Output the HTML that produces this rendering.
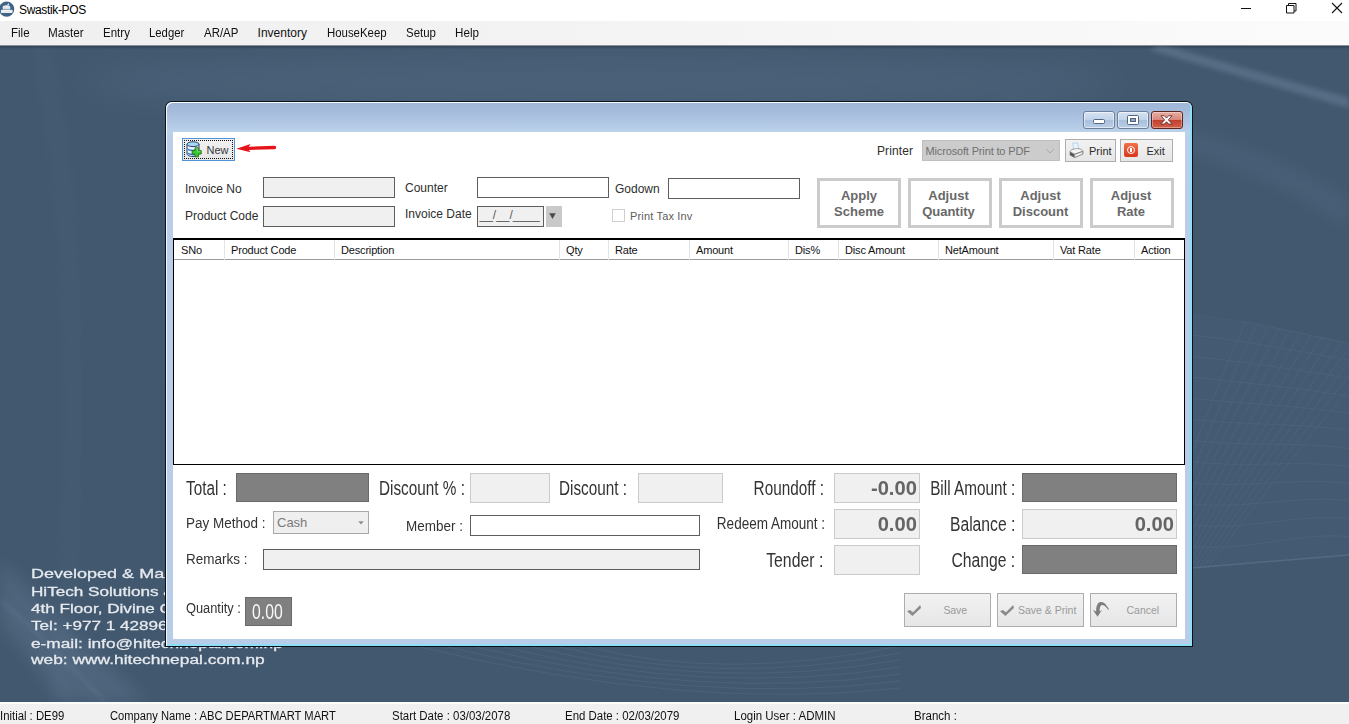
<!DOCTYPE html>
<html>
<head>
<meta charset="utf-8">
<title>Swastik-POS</title>
<style>
*{box-sizing:border-box;margin:0;padding:0}
html,body{width:1349px;height:724px;overflow:hidden}
body{position:relative;font-family:"Liberation Sans",sans-serif;font-size:12px;color:#000;background:#42586f}
.abs{position:absolute}
.t{position:absolute;white-space:nowrap;line-height:1}
#titlebar{left:0;top:0;width:1349px;height:21px;background:#fff}
#menubar{left:0;top:21px;width:1349px;height:24px;background:linear-gradient(90deg,#f0f0f0 0,#f2f2f2 35%,#fbfbfb 100%)}
#menubar .t{top:6px;font-size:12px;color:#111}
#mdi{left:0;top:45px;width:1349px;height:657px;background:#42586f;overflow:hidden;border-top:1px solid #8b9097}
#status{left:0;top:702px;width:1349px;height:22px;background:#f0f0f0;border-top:2px solid #fcfcfc}
#status .t{top:5.500px;font-size:12px;color:#111;transform-origin:0 50%;transform:scaleX(.935)}
.cb{border:1px solid #6d7f99;border-radius:3px;background:linear-gradient(#d6e2f1 0,#c1d3ea 48%,#a9c0de 52%,#b9cde6 100%);box-shadow:inset 0 0 0 1px rgba(255,255,255,.55)}
.cb.cx{border-color:#5d2620;background:linear-gradient(#e9ada3 0,#d9877a 48%,#c2402f 52%,#d4604a 100%);box-shadow:inset 0 0 0 1px rgba(255,255,255,.35)}
#dlg{left:165px;top:101px;width:1028px;height:546px;background:#0b1118;border-radius:7px 7px 0 0}
#dlgin{left:1px;top:1px;width:1026px;height:544px;border-radius:6px 6px 0 0;background:linear-gradient(#9fb6d7 0,#a3bbda 8px,#afc6e3 19px,#bcd1ea 30px,#b9cfe9 36px,#b8cee8 100%);box-shadow:inset 1px 1px 0 0 #f6f9fd,inset -2px -2px 0 0 #8edef8}
#content{left:173px;top:132px;width:1012px;height:507px;background:#fff}
.lbl{font-size:12px;color:#2e2e2e}
.inp{position:absolute;border:1px solid #5e5e5e;background:#fff}
.inp.dis{background:#f0f0f0}
.gbox{position:absolute;background:#808080;border:1px solid #6a6a6a}
.lbox{position:absolute;background:#f0f0f0;border:1px solid #cbcbcb}
.bigbtn{position:absolute;border:3px solid #cbcbcb;background:#fff;color:#686868;font-weight:bold;font-size:13px;line-height:16px;text-align:center;padding-top:7px}
.sbtn{position:absolute;border:1px solid #adadad;background:linear-gradient(#f2f2f2,#e6e6e6)}
.hdr{position:absolute;top:0;height:20px;border-left:1px solid #e3e3e3;font-size:11px;color:#111;padding:4px 0 0 6px;white-space:nowrap;letter-spacing:-.17px}
.num{position:absolute;white-space:nowrap;line-height:1;font-weight:bold;color:#656565;font-size:21px;right:2px;top:3.200px;transform-origin:100% 50%;transform:scaleX(.96)}
.bg{position:absolute;white-space:nowrap;line-height:1;left:30.600px;font-weight:normal;-webkit-text-stroke:.28px #e6eaef;color:#e6eaef;font-size:13px;transform-origin:0 50%}
</style>
</head>
<body>
<div id="titlebar" class="abs">
<svg class="abs" style="left:0;top:0" width="16" height="18" viewBox="0 0 16 18"><circle cx="6.700" cy="9.100" r="7.600" fill="#3f6488"/><path d="M0.900 9.900h11.600v3H0.900z" fill="#fbfbfb"/><path d="M1 11.200h11.400" stroke="#c9d3de" stroke-width=".6"/><path d="M2.700 9.400V7.200c0-1.200 1.300-1.900 3.700-1.900s3.800.7 3.800 1.900v2.200z" fill="#e9edf2"/><path d="M6.800 5.300l1.600-2.100 1 .7-1.200 1.800z" fill="#dfe5ec"/><path d="M3.600 8.300h2.300M7 8.300h2.300" stroke="#b8c3cf" stroke-width=".7"/></svg>
<div class="t" style="left:19px;top:4px;font-size:12px;color:#000;letter-spacing:-.35px">Swastik-POS</div>
<svg class="abs" style="left:1236px;top:0" width="113" height="22" viewBox="0 0 113 22"><g stroke="#111" stroke-width="1" fill="none"><path d="M5 8.500h10"/><path d="M50.500 5.500h7.500v7.500h-7.500z"/><path d="M52.500 5.500v-2h7.500v7.500h-2"/><path d="M96 3l10 10M106 3L96 13" stroke-width="1.100"/></g></svg>
</div>
<div id="menubar" class="abs"><div class="t" style="left:10.5px;transform-origin:0 50%;transform:scaleX(0.96)">File</div><div class="t" style="left:47.6px;transform-origin:0 50%;transform:scaleX(0.975)">Master</div><div class="t" style="left:102.5px;transform-origin:0 50%;transform:scaleX(0.96)">Entry</div><div class="t" style="left:148.5px;transform-origin:0 50%;transform:scaleX(0.945)">Ledger</div><div class="t" style="left:203.8px;transform-origin:0 50%;transform:scaleX(0.955)">AR/AP</div><div class="t" style="left:257.6px;transform-origin:0 50%;transform:scaleX(1)">Inventory</div><div class="t" style="left:326.6px;transform-origin:0 50%;transform:scaleX(0.95)">HouseKeep</div><div class="t" style="left:405.6px;transform-origin:0 50%;transform:scaleX(0.955)">Setup</div><div class="t" style="left:454.5px;transform-origin:0 50%;transform:scaleX(0.97)">Help</div></div>
<div id="mdi" class="abs"><svg class="abs" style="left:0;top:-1px" width="1349" height="657" viewBox="0 45 1349 657"><defs><filter id="b8" x="-20%" y="-50%" width="140%" height="200%"><feGaussianBlur stdDeviation="8"/></filter><filter id="b16" x="-20%" y="-100%" width="140%" height="300%"><feGaussianBlur stdDeviation="16"/></filter><filter id="b3" x="-20%" y="-50%" width="140%" height="200%"><feGaussianBlur stdDeviation="2.5"/></filter><clipPath id="mclip"><path d="M1180 313 C1240 318 1300 332 1360 345 L1360 554 L1180 569z"/></clipPath><linearGradient id="topsh" x1="0" y1="0" x2="0" y2="1"><stop offset="0" stop-color="#2e3e52" stop-opacity=".9"/><stop offset="1" stop-color="#2e3e52" stop-opacity="0"/></linearGradient></defs><rect x="0" y="46" width="1349" height="3" fill="url(#topsh)"/><ellipse cx="600" cy="82" rx="520" ry="26" fill="#8fb0d0" opacity=".10" filter="url(#b16)"/><path d="M1160 44 L1349 98 L1349 108 L1150 50z" fill="#a9c4de" opacity=".2" filter="url(#b3)"/><path d="M1000 100 C1150 110 1280 150 1349 200 L1349 230 C1270 170 1150 130 1000 118z" fill="#8fb0d0" opacity=".07" filter="url(#b8)"/><path d="M0 560 C40 600 90 650 150 702 L60 702 C40 670 15 640 0 625z" fill="#9fbcd8" opacity=".12" filter="url(#b8)"/><path d="M0 600 C30 625 70 665 105 702" fill="none" stroke="#b5cde4" stroke-width="2" opacity=".16" filter="url(#b3)"/><path d="M40 45 C75 200 85 420 60 702" fill="none" stroke="#b5cde4" stroke-width="14" opacity=".03" filter="url(#b8)"/><path d="M1180 313 C1240 318 1300 332 1360 345 L1360 554 L1180 569z" fill="#8fb0d0" opacity=".035"/><path d="M1180 569 L1360 554" stroke="#a9c4de" stroke-width="1.500" opacity=".16" fill="none"/><g fill="none" stroke="#9fbad4" stroke-width="1" opacity=".09"><path d="M420 647 Q690 712 900 688"/><path d="M448 647 Q696 707 900 681"/><path d="M476 647 Q702 702 900 674"/><path d="M504 647 Q708 697 900 667"/><path d="M532 647 Q714 692 900 660"/><path d="M560 647 Q720 687 900 653"/><path d="M588 647 Q726 682 900 646"/></g><g fill="none" stroke="#9fbad4" stroke-width="1" opacity=".075" clip-path="url(#mclip)"><path d="M1180 313 C1240 317 1300 335 1360 345"/><path d="M1180 334 C1240 339 1300 352 1360 362"/><path d="M1180 355 C1240 361 1300 370 1360 380"/><path d="M1180 376 C1240 382 1300 388 1360 398"/><path d="M1180 397 C1240 404 1300 405 1360 415"/><path d="M1180 418 C1240 426 1300 422 1360 432"/><path d="M1180 439 C1240 448 1300 440 1360 450"/><path d="M1180 460 C1240 470 1300 458 1360 468"/><path d="M1180 481 C1240 491 1300 475 1360 485"/><path d="M1180 502 C1240 513 1300 492 1360 502"/><path d="M1180 523 C1240 535 1300 510 1360 520"/><path d="M1180 544 C1240 557 1300 528 1360 538"/><path d="M1150 575 Q1192 440 1255 300"/><path d="M1154 575 Q1201 440 1268 300"/><path d="M1158 575 Q1210 440 1281 300"/><path d="M1162 575 Q1218 440 1294 300"/><path d="M1166 575 Q1226 440 1307 300"/><path d="M1170 575 Q1235 440 1320 300"/><path d="M1174 575 Q1244 440 1333 300"/><path d="M1178 575 Q1252 440 1346 300"/><path d="M1182 575 Q1260 440 1359 300"/><path d="M1186 575 Q1269 440 1372 300"/><path d="M1190 575 Q1278 440 1385 300"/><path d="M1194 575 Q1286 440 1398 300"/><path d="M1198 575 Q1294 440 1411 300"/><path d="M1202 575 Q1303 440 1424 300"/></g></svg><div class="bg" style="top:521.26px;font-size:13.4px;transform:scaleX(1.345)">Developed &amp; Maintained By:</div><div class="bg" style="top:539.82px;font-size:12.5px;transform:scaleX(1.37)">HiTech Solutions &amp; Services</div><div class="bg" style="top:557.42px;font-size:12.5px;transform:scaleX(1.37)">4th Floor, Divine Complex</div><div class="bg" style="top:573.72px;font-size:12.5px;transform:scaleX(1.37)">Tel: +977 1 4289640</div><div class="bg" style="top:591.72px;font-size:12.5px;transform:scaleX(1.382)">e-mail: info@hitechnepal.com.np</div><div class="bg" style="top:608.42px;font-size:12.5px;transform:scaleX(1.39)">web: www.hitechnepal.com.np</div></div>
<div id="dlg" class="abs"><div id="dlgin" class="abs"></div>
<div class="abs cb" style="left:918px;top:10px;width:32px;height:18px"><div class="abs" style="left:9px;top:7px;width:12px;height:5px;background:#fff;border:1px solid #55657f;border-radius:1.500px"></div></div>
<div class="abs cb" style="left:952px;top:10px;width:32px;height:18px"><div class="abs" style="left:9px;top:3px;width:12px;height:9.500px;background:#fff;border:1px solid #55657f;border-radius:1.500px"><div class="abs" style="left:2px;top:2px;width:6px;height:3.500px;background:#8ea3c0;border:1px solid #55657f"></div></div></div>
<div class="abs cb cx" style="left:986px;top:10px;width:32px;height:18px"><svg class="abs" style="left:8px;top:3px" width="13" height="9.800" viewBox="0 0 14 10.600" preserveAspectRatio="none"><path d="M1 0.800h3.700l2.300 2.500 2.300-2.500H13L9 5.300l4.200 4.500H9.300L7 7.300 4.700 9.800H0.800L5 5.300z" fill="#fff" stroke="#5d2a26" stroke-width=".9" stroke-linejoin="round"/></svg></div>
</div>
<div id="content" class="abs">
<div class="abs" style="left:9px;top:6px;width:53px;height:23px;border:1px solid #4f93d8;background:linear-gradient(#f1f1f1,#e6e6e6)"><div class="abs" style="left:1px;top:1px;width:49px;height:19px;border:1px dotted #111"></div><svg class="abs" style="left:2.500px;top:2px" width="16" height="17" viewBox="0 0 16 17"><path d="M1 3.200v9.600c0 1.500 2.700 2.700 6 2.700s6-1.200 6-2.700V3.200z" fill="#eaf3fb" stroke="#2b3f68" stroke-width="1"/><path d="M1.500 6.400c0 1.300 2.500 2.300 5.500 2.300s5.500-1 5.500-2.300v1.700c0 1.300-2.500 2.300-5.500 2.300s-5.500-1-5.500-2.300zM1.500 10.400c0 1.300 2.500 2.300 5.500 2.300s5.500-1 5.500-2.300v1.700c0 1.300-2.500 2.300-5.500 2.300s-5.500-1-5.500-2.300z" fill="#3d78c8"/><ellipse cx="7" cy="3.200" rx="6" ry="2.400" fill="#a6dbf3" stroke="#2b3f68" stroke-width="1"/><path d="M9 6.800h3.400v2.800h2.800V13h-2.800v2.800H9V13H6.200V9.600H9z" fill="#3fca2f" stroke="#1c6f18" stroke-width=".9" stroke-linejoin="round"/><path d="M9.700 7.600h2v2.800h2.800" fill="none" stroke="#9af08c" stroke-width=".7" opacity=".8"/></svg><div class="t" style="left:23.500px;top:6px;font-size:11px;color:#3a3a3a">New</div></div>
<svg class="abs" style="left:63px;top:10px" width="42" height="12" viewBox="0 0 42 12"><path d="M0.300 6.700L14.600 2.100 12.800 4.700 38.500 3.800c2.200 0 2.200 3.400 0 3.500L12.800 8l1.800 2.200z" fill="#e6141a"/></svg>
<div class="t lbl" style="left:704px;top:13.4px;letter-spacing:.1px">Printer</div>
<div class="abs" style="left:749px;top:8px;width:138px;height:21px;background:#cccccc;border:1px solid #bfbfbf"><div class="t" style="left:2.500px;top:5.300px;font-size:11px;color:#707070;letter-spacing:-.15px">Microsoft Print to PDF</div><svg class="abs" style="left:122px;top:7px" width="10" height="7" viewBox="0 0 10 7"><path d="M1 1l4 4 4-4" fill="none" stroke="#a9a9a9" stroke-width="1"/></svg></div>
<div class="sbtn" style="left:892px;top:7px;width:51px;height:23px"><svg class="abs" style="left:2.500px;top:1.500px" width="15" height="17" viewBox="0 0 15 17"><path d="M3.800 1.200l4.800-.400 1.200 6.400-5.200 1z" fill="#eaf4ff" stroke="#a9c9ee" stroke-width=".8"/><path d="M1 9.800C1 8.300 4 6.700 7.600 6.600c3.400 0 6.300 1 6.300 2.800v2.600l-8.400 3.600L1 13z" fill="#f3f3f3" stroke="#8a8a8a" stroke-width=".8"/><path d="M1 9.900l4.500 2.300 8.400-2.900" fill="none" stroke="#6f6f6f" stroke-width=".9"/><path d="M1 10.200l4.500 2.300v3l-4.500-2.600z" fill="#555"/><path d="M5.500 12.500l8.400-3v2.500l-8.400 3.500z" fill="#d8d8d8" stroke="#777" stroke-width=".6"/><path d="M6.500 13.600l6-2.300" stroke="#fff" stroke-width="1"/></svg><div class="t" style="left:23px;top:5.500px;font-size:11px;color:#2b2b2b">Print</div></div>
<div class="sbtn" style="left:947px;top:7px;width:53px;height:23px"><div class="abs" style="left:3px;top:3px;width:14px;height:14px;border-radius:2px;background:linear-gradient(#f2704a,#d8361a)"><div class="abs" style="left:2.700px;top:2.700px;width:8.600px;height:8.600px;border:1.400px solid #fff;border-radius:50%"></div><div class="abs" style="left:6.300px;top:5.300px;width:1.400px;height:3.400px;background:#fff"></div></div><div class="t" style="left:25.500px;top:5.500px;font-size:11px;color:#2b2b2b">Exit</div></div>
<div class="t lbl" style="left:12px;top:51px;">Invoice No</div>
<div class="inp dis" style="left:90px;top:45px;width:132px;height:21px"></div>
<div class="t lbl" style="left:232px;top:50px;">Counter</div>
<div class="inp " style="left:304px;top:45px;width:132px;height:21px"></div>
<div class="t lbl" style="left:442px;top:51px;">Godown</div>
<div class="inp " style="left:495px;top:46px;width:132px;height:21px"></div>
<div class="t lbl" style="left:12px;top:78px;">Product Code</div>
<div class="inp dis" style="left:90px;top:74px;width:132px;height:21px"></div>
<div class="t lbl" style="left:232px;top:76px;">Invoice Date</div>
<div class="inp dis" style="left:304px;top:74px;width:67px;height:21px"><div class="t" style="left:1.500px;top:2px;font-size:12px;color:#5a5a5a">__/__/____</div></div>
<div class="abs" style="left:373px;top:74px;width:16px;height:21px;background:#c9c9c9"><svg class="abs" style="left:3px;top:7px" width="8" height="7" viewBox="0 0 8 7"><path d="M0.300 0.300h6.400L3.500 6z" fill="#4a4a4a"/></svg></div>
<div class="abs" style="left:439px;top:77px;width:13px;height:13px;border:1px solid #cfcfcf;background:#fff"></div>
<div class="t lbl" style="left:457px;top:79px;font-size:11px;color:#5c5c5c;letter-spacing:.17px">Print Tax Inv</div>
<div class="bigbtn" style="left:644px;top:46px;width:84px;height:50px;padding-right:0px">Apply<br>Scheme</div>
<div class="bigbtn" style="left:735px;top:46px;width:84px;height:50px;padding-right:3px">Adjust<br>Quantity</div>
<div class="bigbtn" style="left:826px;top:46px;width:84px;height:50px;padding-right:1px">Adjust<br>Discount</div>
<div class="bigbtn" style="left:917px;top:46px;width:84px;height:50px;padding-right:2px">Adjust<br>Rate</div>
<div class="abs" id="grid" style="left:0px;top:106px;width:1012px;height:227px;border:1px solid #000;border-top-width:2px;background:#fff"><div class="abs" style="left:0;top:0;width:1010px;height:20px;border-bottom:1px solid #9a9a9a;background:#fff"></div><div class="hdr" style="left:1px;border-left:none;">SNo</div><div class="hdr" style="left:50px;">Product Code</div><div class="hdr" style="left:160px;">Description</div><div class="hdr" style="left:385px;">Qty</div><div class="hdr" style="left:434px;">Rate</div><div class="hdr" style="left:515px;">Amount</div><div class="hdr" style="left:614px;">Dis%</div><div class="hdr" style="left:664px;">Disc Amount</div><div class="hdr" style="left:764px;">NetAmount</div><div class="hdr" style="left:879px;">Vat Rate</div><div class="hdr" style="left:960px;">Action</div></div>
<div class="t" style="left:13px;top:345.77px;font-size:20px;color:#333;transform-origin:0 50%;transform:scaleX(0.765)">Total :</div>
<div class="t" style="left:206px;top:345.77px;font-size:20px;color:#333;transform-origin:0 50%;transform:scaleX(0.765)">Discount % :</div>
<div class="t" style="left:386px;top:345.77px;font-size:20px;color:#333;transform-origin:0 50%;transform:scaleX(0.765)">Discount :</div>
<div class="t" style="right:361.5px;top:346.07px;font-size:20px;color:#333;transform-origin:100% 50%;transform:scaleX(0.765)">Roundoff :</div>
<div class="t" style="right:169.5px;top:345.77px;font-size:20px;color:#333;transform-origin:100% 50%;transform:scaleX(0.765)">Bill Amount :</div>
<div class="t" style="left:13px;top:384.38px;font-size:14.67px;color:#333;transform-origin:0 50%;transform:scaleX(0.92)">Pay Method :</div>
<div class="t" style="left:233px;top:386.58px;font-size:14.67px;color:#333;transform-origin:0 50%;transform:scaleX(0.92)">Member :</div>
<div class="t" style="right:359.5px;top:384.46px;font-size:16px;color:#333;transform-origin:100% 50%;transform:scaleX(0.845)">Redeem Amount :</div>
<div class="t" style="right:169.5px;top:382.37px;font-size:20px;color:#333;transform-origin:100% 50%;transform:scaleX(0.785)">Balance :</div>
<div class="t" style="left:13px;top:420.48px;font-size:14.67px;color:#333;transform-origin:0 50%;transform:scaleX(0.92)">Remarks :</div>
<div class="t" style="right:361.5px;top:417.67px;font-size:20px;color:#333;transform-origin:100% 50%;transform:scaleX(0.79)">Tender :</div>
<div class="t" style="right:169.5px;top:417.67px;font-size:20px;color:#333;transform-origin:100% 50%;transform:scaleX(0.785)">Change :</div>
<div class="t" style="left:13px;top:468.78px;font-size:14.67px;color:#333;transform-origin:0 50%;transform:scaleX(0.875)">Quantity :</div>
<div class="gbox" style="left:63px;top:341px;width:133px;height:29px"></div>
<div class="lbox" style="left:297px;top:341px;width:80px;height:30px"></div>
<div class="lbox" style="left:465px;top:341px;width:85px;height:30px"></div>
<div class="lbox" style="left:661px;top:341px;width:86px;height:30px"><div class="num">-0.00</div></div>
<div class="gbox" style="left:849px;top:341px;width:155px;height:29px"></div>
<div class="abs" style="left:100px;top:379px;width:96px;height:23px;background:#efefef;border:1px solid #a9a9a9"><div class="t" style="left:3px;top:4px;font-size:13px;color:#7a7a7a">Cash</div><svg class="abs" style="left:84px;top:9px" width="6" height="4" viewBox="0 0 6 4"><path d="M0.300 0.300h5.400L3 3.500z" fill="#8e8e8e"/></svg></div>
<div class="inp" style="left:297px;top:383px;width:230px;height:21px"></div>
<div class="lbox" style="left:661px;top:377px;width:86px;height:30px"><div class="num">0.00</div></div>
<div class="lbox" style="left:849px;top:377px;width:155px;height:30px"><div class="num">0.00</div></div>
<div class="inp dis" style="left:90px;top:417px;width:437px;height:21px"></div>
<div class="lbox" style="left:661px;top:413px;width:86px;height:30px"></div>
<div class="gbox" style="left:849px;top:413px;width:155px;height:29px"></div>
<div class="gbox" style="left:72px;top:465px;width:47px;height:29px"><div class="t" style="left:6px;top:2.500px;font-size:22.500px;color:#f8f8f8;transform-origin:0 50%;transform:scaleX(.7)">0.00</div></div>
<div class="sbtn" style="left:731px;top:461px;width:87px;height:34px"><svg class="abs" style="left:0;top:9px" width="18" height="15" viewBox="0 0 18 15"><path d="M2 8.300L4.900 7.100 8 9.300 15.200 2.100 16 5 7.400 12.900z" fill="#8c8c8c"/></svg><div class="t" style="left:38.500px;top:10.600px;font-size:10.500px;color:#9a9a9a;letter-spacing:-.15px">Save</div></div>
<div class="sbtn" style="left:824px;top:461px;width:87px;height:34px"><svg class="abs" style="left:0;top:9px" width="18" height="15" viewBox="0 0 18 15"><path d="M2 8.300L4.900 7.100 8 9.300 15.200 2.100 16 5 7.400 12.900z" fill="#8c8c8c"/></svg><div class="t" style="left:20px;top:10.600px;font-size:10.500px;color:#9a9a9a">Save &amp; Print</div></div>
<div class="sbtn" style="left:917px;top:461px;width:87px;height:34px"><svg class="abs" style="left:0;top:6px" width="20" height="18" viewBox="0 0 20 18"><path d="M6.500 16.700L2 10l3.200 1.500C5 7 6 2.200 9.800 2c3.700 0 6.200 3.500 8.200 7.600l-.5.400c-3-4-5-5.200-6.700-5-1.800.5-2.200 3-2.200 6.500L11 10z" fill="#7d7d7d"/></svg><div class="t" style="left:35.500px;top:10.600px;font-size:10.500px;color:#9a9a9a">Cancel</div></div>
</div>
<div id="status" class="abs"><div class="t" style="left:0px;transform:scaleX(0.945)">Initial : DE99</div><div class="t" style="left:110px;transform:scaleX(0.932)">Company Name : ABC DEPARTMART MART</div><div class="t" style="left:392px;transform:scaleX(0.953)">Start Date : 03/03/2078</div><div class="t" style="left:565px;transform:scaleX(0.953)">End Date : 02/03/2079</div><div class="t" style="left:734px;transform:scaleX(0.957)">Login User : ADMIN</div><div class="t" style="left:914px;transform:scaleX(0.96)">Branch :</div></div>
</body>
</html>
